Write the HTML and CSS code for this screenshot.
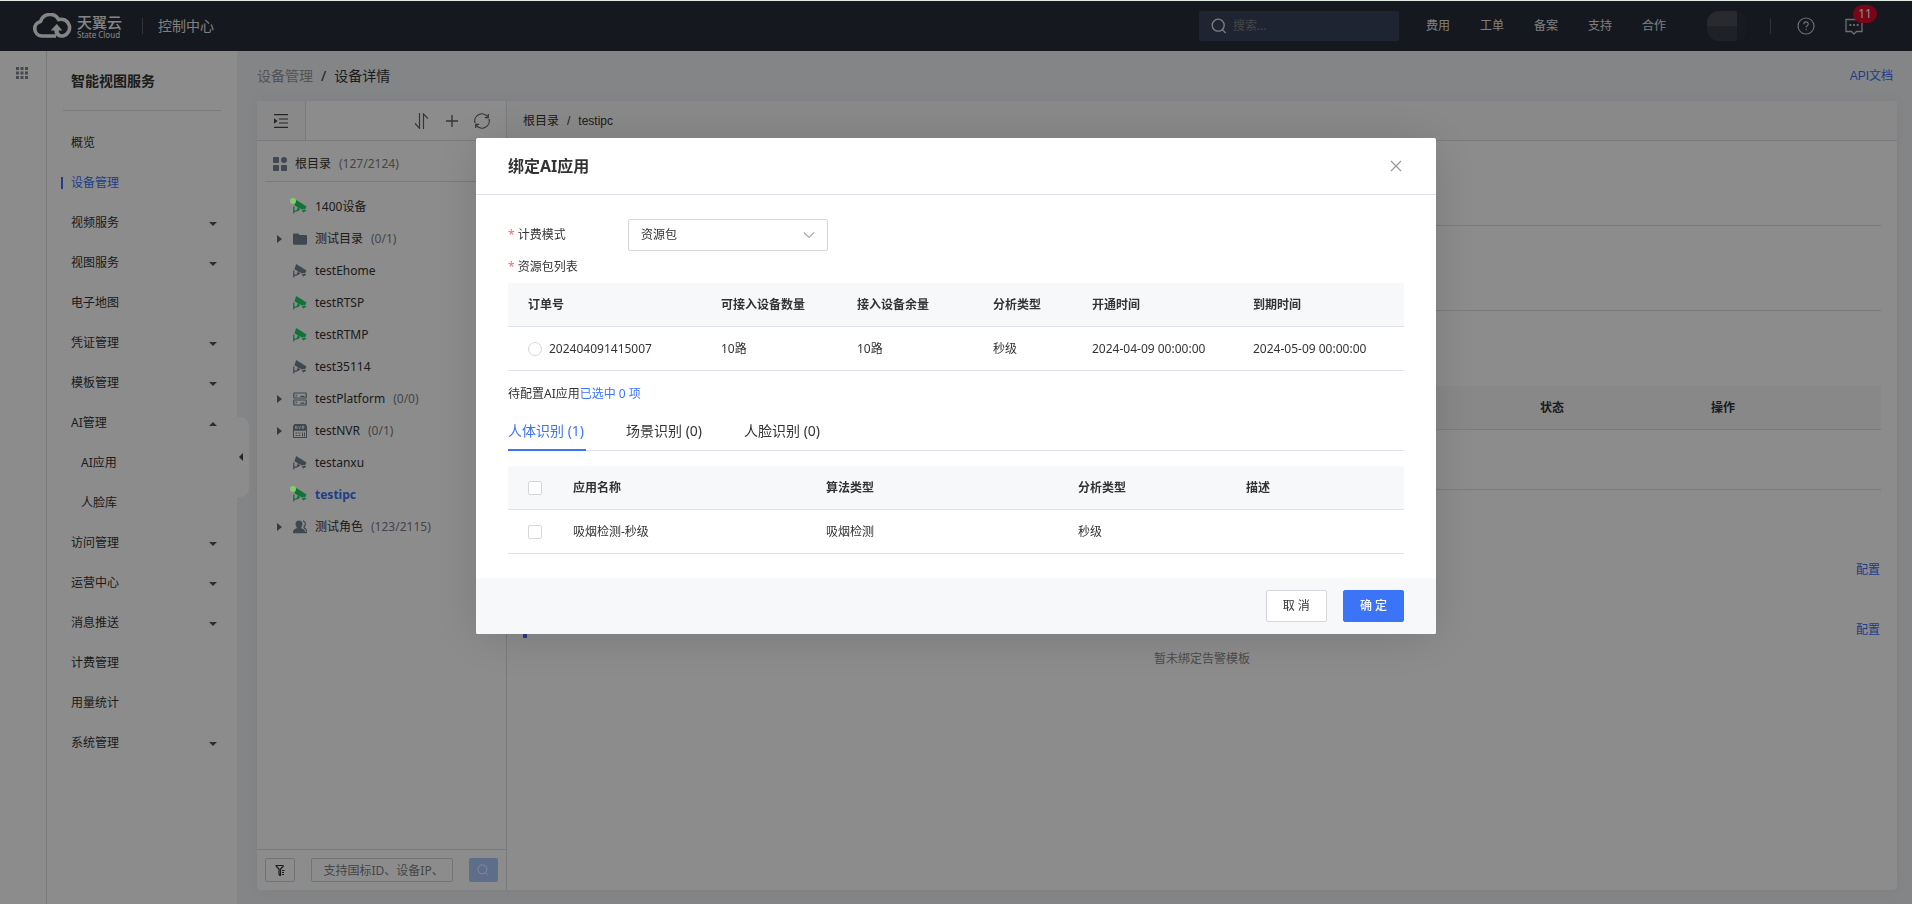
FILE: index.html
```html
<!DOCTYPE html>
<html lang="zh-CN">
<head>
<meta charset="utf-8">
<title>控制中心</title>
<link rel="stylesheet" href="styles.css">
</head>
<body>
<svg class="sprite" aria-hidden="true">
  <symbol id="camera" viewBox="0 0 14 14">
    <path fill="currentColor" d="M3.200 0 13.600 6.600 12.400 8.800 8.800 9.400 1.400 5.200z"/>
    <path fill="currentColor" d="M8.600 10.600l4-1 .6 1.200-3 1.600z"/>
    <path fill="none" stroke="currentColor" stroke-width="1.300" d="M.8 6.600v7M.8 11.400l3.200-.6 1.600-3.400M4 10.800l3-1.800"/>
  </symbol>
  <symbol id="folder" viewBox="0 0 14 14"><path fill="currentColor" d="M0 2.600C0 1.900.5 1.400 1.200 1.400h4l1.500 1.700h6.100c.7 0 1.200.5 1.200 1.200v7.200c0 .7-.5 1.200-1.200 1.200H1.200C.5 12.700 0 12.200 0 11.500z"/></symbol>
  <symbol id="server" viewBox="0 0 14 14"><g fill="none" stroke="currentColor" stroke-width="1.200"><rect x=".8" y="1" width="12.400" height="5" rx=".6"/><rect x=".8" y="8" width="12.400" height="5" rx=".6"/><path d="M3.200 2.800v1.600M3.200 9.600v1.600M7.500 4.400h4M7.500 11.200h4"/></g></symbol>
  <symbol id="nvr" viewBox="0 0 14 14"><path fill="currentColor" d="M1.500 0h11L14 2v4.500H0V2z"/><g fill="none" stroke="currentColor"><rect x=".5" y="6" width="13" height="7.500"/><path d="M2.500 9h2M2.500 11.500h2M5.500 9h2M5.500 11.500h2M9.500 8.500v4M11.500 8.500v4"/></g><path fill="none" stroke="#fff" stroke-width=".7" d="M2.500 4.900V2l1.500 2.900V2M5.600 2l1 2.900 1-2.900M9.300 4.900V2h1.500v1.400H9.400l1.700 1.500"/></symbol>
  <symbol id="user" viewBox="0 0 14 14"><path fill="currentColor" d="M6 .4c2.200 0 3.600 1.600 3.500 3.700 0 1.400-.6 2.500-1.300 3.200v1c1.900.5 3.900 1.400 3.900 3.600v1.300H0v-1.300c0-2.200 1.800-3.100 3.800-3.600v-1C3 6.600 2.500 5.500 2.500 4.100 2.400 2 3.800.4 6 .4z"/><path fill="none" stroke="currentColor" stroke-width="1.200" d="M10 .9c3 .8 3 4.300.9 6l.3 1c1.500.6 2.200 1.500 2.200 3.100v1.600h-1.400"/></symbol>
  <symbol id="search" viewBox="0 0 16 16"><circle cx="7.200" cy="7.200" r="6" fill="none" stroke="currentColor" stroke-width="1.300"/><path d="M11.400 11.600l3.200 3.400" stroke="currentColor" stroke-width="1.300"/></symbol>
</svg>

<div class="app">
  <header class="topbar">
    <a class="logo" href="#">
      <svg class="logo-mark" viewBox="0 0 40 26" aria-hidden="true"><path fill="none" stroke="currentColor" stroke-width="3.600" stroke-linejoin="round" d="M24 23H9.500A7.400 7.400 0 0 1 8.600 8.400 9.800 9.800 0 0 1 26.600 6.600a8.200 8.200 0 0 1 5 16.200c-4 .8-7.400-1.800-7.200-6.800"/><path fill="currentColor" d="M18.600 17.400l6.200-6.400 5.600 6.400-3.800.2c0 2.400.6 3.600 2 4.600l-1.600 2.200c-3.200-1.200-4.700-3.400-4.700-6.800z"/></svg>
      <span class="logo-words"><b class="logo-cn">天翼云</b><span class="logo-en">State Cloud</span></span>
    </a>
    <span class="bar-line"></span>
    <span class="console">控制中心</span>
    <label class="search"><svg class="i16"><use href="#search"/></svg><input type="text" placeholder="搜索..." aria-label="搜索"></label>
    <nav class="topnav"><a href="#">费用</a><a href="#">工单</a><a href="#">备案</a><a href="#">支持</a><a href="#">合作</a></nav>
    <span class="avatar"></span>
    <span class="bar-line"></span>
    <button class="iconbtn help" aria-label="帮助"><svg viewBox="0 0 18 18" fill="none" stroke="currentColor" stroke-width="1.200"><circle cx="9" cy="9" r="8"/><path d="M6.800 7.200c0-3 4.500-3 4.500-.2 0 1.700-2.200 1.700-2.200 3.600M9.100 12v1.300"/></svg></button>
    <button class="iconbtn msg" aria-label="消息"><svg viewBox="0 0 18 18" fill="none" stroke="currentColor" stroke-width="1.300"><path d="M1 2.500h16v12h-5.500L9 17l-2.500-2.500H1z"/><path stroke-width="1.800" d="M4.500 8h1.800M8.100 8h1.800M11.700 8h1.800"/></svg><span class="badge">11</span></button>
  </header>

  <div class="shell">
    <div class="rail"><button class="iconbtn" aria-label="全部产品"><svg class="i12" viewBox="0 0 12 12" fill="currentColor"><path d="M0 0h3v3H0zM4.500 0h3v3h-3zM9 0h3v3H9zM0 4.500h3v3H0zM4.500 4.500h3v3h-3zM9 4.500h3v3H9zM0 9h3v3H0zM4.500 9h3v3h-3zM9 9h3v3H9z"/></svg></button></div>

    <aside class="sidebar">
      <h2 class="side-title">智能视图服务</h2>
      <nav class="menu">
        <a href="#">概览</a>
        <a href="#" class="active">设备管理</a>
        <a href="#" class="more">视频服务</a>
        <a href="#" class="more">视图服务</a>
        <a href="#">电子地图</a>
        <a href="#" class="more">凭证管理</a>
        <a href="#" class="more">模板管理</a>
        <a href="#" class="more open">AI管理</a>
        <a href="#" class="sub">AI应用</a>
        <a href="#" class="sub">人脸库</a>
        <a href="#" class="more">访问管理</a>
        <a href="#" class="more">运营中心</a>
        <a href="#" class="more">消息推送</a>
        <a href="#">计费管理</a>
        <a href="#">用量统计</a>
        <a href="#" class="more">系统管理</a>
      </nav>
      <button class="fold" aria-label="收起菜单"></button>
    </aside>

    <main class="main">
      <div class="crumbs"><a href="#" class="crumb-parent">设备管理</a><span>/</span><span>设备详情</span><a href="#" class="api">API文档</a></div>
      <div class="card">
        <section class="devices">
          <div class="tools">
            <button class="iconbtn indent" aria-label="收起目录"><svg class="i14" viewBox="0 0 14 14"><path stroke="currentColor" stroke-width="1.200" d="M0 .6h14M5 5h9M5 9h9M0 13.400h14"/><path fill="currentColor" d="M0 4.200v5.600L3.600 7z"/></svg></button>
            <div class="tool-group">
              <button class="iconbtn" aria-label="排序"><svg class="i16" viewBox="0 0 16 16" fill="none" stroke="currentColor" stroke-width="1.200"><path d="M1 10.500 5.500 15.200V0M9.500 16V1l4.500 4.600"/></svg></button>
              <button class="iconbtn" aria-label="添加"><svg class="i16" viewBox="0 0 16 16" stroke="currentColor" stroke-width="1.400"><path d="M8 2v12M2 8h12"/></svg></button>
              <button class="iconbtn" aria-label="刷新"><svg class="i16" viewBox="0 0 16 16" fill="none" stroke="currentColor" stroke-width="1.200"><path d="M1 10A7.200 7.200 0 0 1 13.500 3.500M15 6A7.200 7.200 0 0 1 2.500 12.500M14.300 1v3.600h-3.400M1.700 15v-3.600h3.400"/></svg></button>
            </div>
          </div>
          <div class="root"><svg class="i14" viewBox="0 0 14 14" fill="currentColor"><rect width="6" height="6" rx=".8"/><circle cx="11" cy="3" r="3"/><rect y="8" width="6" height="6" rx=".8"/><rect x="8" y="8" width="6" height="6" rx=".8"/></svg><span>根目录</span><span class="count">(127/2124)</span></div>
          <ul class="tree">
            <li class="online live"><svg class="i14"><use href="#camera"/></svg><span>1400设备</span></li>
            <li class="branch"><svg class="i14"><use href="#folder"/></svg><span>测试目录</span><span class="count">(0/1)</span></li>
            <li><svg class="i14"><use href="#camera"/></svg><span>testEhome</span></li>
            <li class="online"><svg class="i14"><use href="#camera"/></svg><span>testRTSP</span></li>
            <li class="online"><svg class="i14"><use href="#camera"/></svg><span>testRTMP</span></li>
            <li><svg class="i14"><use href="#camera"/></svg><span>test35114</span></li>
            <li class="branch"><svg class="i14"><use href="#server"/></svg><span>testPlatform</span><span class="count">(0/0)</span></li>
            <li class="branch"><svg class="i14"><use href="#nvr"/></svg><span>testNVR</span><span class="count">(0/1)</span></li>
            <li><svg class="i14"><use href="#camera"/></svg><span>testanxu</span></li>
            <li class="online live current"><svg class="i14"><use href="#camera"/></svg><span>testipc</span></li>
            <li class="branch"><svg class="i14"><use href="#user"/></svg><span>测试角色</span><span class="count">(123/2115)</span></li>
          </ul>
          <div class="find">
            <button class="find-filter" aria-label="筛选"><svg class="i12" viewBox="0 0 12 12" fill="none" stroke="currentColor" stroke-width="1.200"><path d="M1.500 1.500h8M2 2l3 3v5.500L6.500 12V5l3-3M8 6.500h2.500M8 8.500h2M8 10.500h2"/></svg></button>
            <input class="find-input" type="text" placeholder="支持国标ID、设备IP、" aria-label="搜索设备">
            <button class="find-go" aria-label="搜索"><svg class="i12"><use href="#search"/></svg></button>
          </div>
        </section>

        <section class="detail">
          <div class="path"><span>根目录</span><span>/</span><span>testipc</span></div>
          <div class="detail-body">
            <div class="block"></div>
            <div class="block"></div>
            <table class="grid apps">
              <colgroup><col class="a-rest"><col class="a-state"><col class="a-act"></colgroup>
              <thead><tr><th></th><th>状态</th><th>操作</th></tr></thead>
              <tbody><tr><td></td><td></td><td></td></tr></tbody>
            </table>
            <div class="config first"><a href="#">配置</a></div>
            <div class="config marked"><a href="#">配置</a></div>
            <p class="empty">暂未绑定告警模板</p>
          </div>
        </section>
      </div>
    </main>
  </div>
</div>

<div class="mask">
  <div class="dialog" role="dialog" aria-labelledby="dialog-title">
    <div class="dialog-head">
      <h1 id="dialog-title">绑定AI应用</h1>
      <button class="iconbtn close" aria-label="关闭"><svg class="i12" viewBox="0 0 12 12" stroke="currentColor" stroke-width="1.200"><path d="M1 1l10 10M11 1 1 11"/></svg></button>
    </div>
    <div class="dialog-body">
      <div class="field">
        <label class="required" for="billing">计费模式</label>
        <span class="select-box"><select id="billing"><option>资源包</option></select><svg class="chevron" viewBox="0 0 12 12" fill="none" stroke="currentColor" stroke-width="1.200"><path d="M1 3.500l5 5 5-5"/></svg></span>
      </div>
      <div class="field"><span class="required">资源包列表</span></div>
      <table class="grid">
        <colgroup><col class="p-order"><col class="p-num"><col class="p-num"><col class="p-type"><col class="p-open"><col class="p-end"></colgroup>
        <thead><tr><th>订单号</th><th>可接入设备数量</th><th>接入设备余量</th><th>分析类型</th><th>开通时间</th><th>到期时间</th></tr></thead>
        <tbody><tr><td><label class="pick"><input type="radio" name="pack">202404091415007</label></td><td>10路</td><td>10路</td><td>秒级</td><td>2024-04-09 00:00:00</td><td>2024-05-09 00:00:00</td></tr></tbody>
      </table>
      <p class="chosen">待配置AI应用<span>已选中 0 项</span></p>
      <div class="tabs" role="tablist">
        <button role="tab" class="tab on" aria-selected="true">人体识别 (1)</button>
        <button role="tab" class="tab">场景识别 (0)</button>
        <button role="tab" class="tab">人脸识别 (0)</button>
      </div>
      <table class="grid">
        <colgroup><col class="q-pick"><col class="q-name"><col class="q-algo"><col class="q-type"><col class="q-desc"></colgroup>
        <thead><tr><th><input type="checkbox" aria-label="全选"></th><th>应用名称</th><th>算法类型</th><th>分析类型</th><th>描述</th></tr></thead>
        <tbody><tr><td><input type="checkbox" aria-label="吸烟检测-秒级"></td><td>吸烟检测-秒级</td><td>吸烟检测</td><td>秒级</td><td></td></tr></tbody>
      </table>
    </div>
    <div class="dialog-foot">
      <button class="btn">取 消</button>
      <button class="btn primary">确 定</button>
    </div>
  </div>
</div>
</body>
</html>
```

FILE: styles.css
```css
* { box-sizing: border-box; }

body {
  margin: 0;
  border-top: 1px solid #dfeae4;
  font: 12px/20px "Noto Sans", "Noto Sans CJK SC", sans-serif;
  color: #333;
  background: #f0f2f5;
}

a { color: inherit; text-decoration: none; }
button, input, select { font: inherit; color: inherit; }
h1, h2, p, ul { margin: 0; padding: 0; }
.sprite { position: absolute; width: 0; height: 0; }
.i12 { width: 12px; height: 12px; display: block; flex: none; }
.i14 { width: 14px; height: 14px; display: block; flex: none; overflow: visible; }
.i16 { width: 16px; height: 16px; display: block; flex: none; }
.iconbtn { padding: 0; border: 0; background: none; display: block; }

.app { display: flex; flex-direction: column; min-height: calc(100vh - 1px); }

/* Top bar */
.topbar {
  display: flex;
  align-items: center;
  height: 50px;
  padding: 0 49px 0 32px;
  background: #272c38;
  color: #e6e6e6;
}
.logo { display: flex; align-items: center; gap: 5px; color: #f2f2f2; }
.logo-mark { width: 40px; height: 26px; }
.logo-words { display: flex; flex-direction: column; width: 46px; }
.logo-cn { font-size: 15px; line-height: 16px; font-weight: 500; }
.logo-en { font-size: 8px; line-height: 9px; white-space: nowrap; }
.bar-line { width: 1px; height: 16px; margin: 0 15px 0 19px; background: #5a5e68; }
.console { font-size: 14px; }
.search {
  display: flex;
  align-items: center;
  gap: 6px;
  width: 200px;
  height: 30px;
  margin-left: auto;
  padding: 0 12px;
  border-radius: 2px;
  background: #38435c;
}
.search input { min-width: 0; flex: 1; padding: 0; border: 0; background: none; outline: 0; }
.search input::placeholder { color: #7c7f87; opacity: 1; }
.topnav { display: flex; gap: 30px; margin: 0 41px 0 27px; }
.avatar {
  width: 40px;
  height: 30px;
  border-radius: 12px;
  background: linear-gradient(#4b4d57 0 50%, #3a3d47 50%) left / 30px 100% no-repeat, #2c313c;
}
.avatar + .bar-line { margin: 0 26px 0 23px; }
.help svg, .msg svg { display: block; width: 18px; height: 18px; }
.help { color: #c8c8c8; }
.msg { position: relative; margin-left: 30px; color: #c8c8c8; }
.badge {
  position: absolute;
  left: 8px;
  top: -12px;
  min-width: 24px;
  height: 18px;
  border-radius: 9px;
  background: #dc0a2d;
  color: #fff;
  line-height: 18px;
  text-align: center;
}

/* Shell and side menu */
.shell { display: flex; flex: 1; }
.rail { width: 47px; padding: 16px; border-right: 1px solid #dfe1e6; background: #fff; color: #7f858e; }
.sidebar { position: relative; width: 190px; padding: 15px 16px 0; background: #fff; }
.side-title {
  height: 45px;
  padding-left: 8px;
  border-bottom: 1px solid #dfe1e6;
  font-size: 14px;
  line-height: 30px;
  font-weight: 700;
}
.menu { display: flex; flex-direction: column; padding-top: 12px; }
.menu a { position: relative; display: flex; align-items: center; justify-content: space-between; height: 40px; padding: 0 4px 0 8px; }
.menu .sub { padding-left: 18px; }
.menu .active { color: #3b6ff5; }
.menu .active::before { content: ""; position: absolute; left: -2px; width: 2px; height: 12px; background: #3b6ff5; }
.more::after { content: ""; margin-top: 2px; border: 4px solid transparent; border-top-color: #555; border-bottom: 0; }
.more.open::after { border-top: 0; border-bottom: 4px solid #555; }
.fold {
  position: absolute;
  left: 100%;
  top: 366px;
  display: flex;
  align-items: center;
  width: 12px;
  height: 80px;
  padding: 0 2px;
  border: 0;
  border-radius: 0 9px 9px 0;
  background: #fff;
}
.fold::before { content: ""; border: 4px solid transparent; border-right-color: #444; border-left: 0; }

/* Main area */
.main { display: flex; flex: 1; flex-direction: column; min-width: 0; padding: 0 15px 14px 20px; }
.crumbs { display: flex; align-items: center; gap: 8px; height: 50px; padding-right: 4px; font-size: 14px; }
.crumb-parent { color: #969799; }
.api { margin-left: auto; font-size: 12px; color: #3b6ff5; font-family: "Liberation Sans", "Noto Sans CJK SC", sans-serif; }
.card { display: flex; flex: 1; border-radius: 4px; background: #fff; box-shadow: 0 0 12px rgba(40, 50, 90, .06); }

.devices { display: flex; flex-direction: column; width: 250px; border-right: 1px solid #dcdfe6; }
.tools { display: flex; height: 40px; border-bottom: 1px solid #dcdfe6; color: #606266; }
.indent { width: 49px; padding-left: 17px; border-right: 1px solid #dcdfe6; background: #fafafa; color: #444; }
.tool-group { display: flex; align-items: center; gap: 14px; margin-left: auto; padding-right: 16px; }
.root {
  display: flex;
  align-items: center;
  gap: 8px;
  height: 41px;
  margin-left: 8px;
  padding: 6px 8px 0;
  border-bottom: 1px solid #dcdfe6;
}
.root svg { color: #768695; }
.count { color: #7c8085; }
.tree { flex: 1; padding-top: 9px; list-style: none; }
.tree li { position: relative; display: flex; align-items: center; gap: 8px; height: 32px; padding-left: 36px; }
.tree svg { color: #758391; }
.tree .online svg { color: #1fd167; }
.branch::before {
  content: "";
  position: absolute;
  left: 20px;
  border: 4px solid transparent;
  border-left: 5px solid #606a74;
  border-right: 0;
}
.live::before { content: ""; position: absolute; left: 33px; top: 7px; width: 6px; height: 6px; border-radius: 50%; background: #84cc6c; z-index: 1; }
.current { color: #3b6ff5; font-weight: 700; }
.find { display: flex; align-items: center; gap: 16px; height: 41px; padding: 0 8px; border-top: 1px solid #dcdfe6; }
.find button { display: grid; place-items: center; width: 30px; height: 24px; padding: 0; border: 1px solid #cfd1d6; border-radius: 2px; background: #fff; }
.find .find-go { border: 0; background: #a9c6fb; color: #fff; }
.find-input { width: 142px; height: 24px; padding: 0 12px; border: 1px solid #cfd1d6; border-radius: 2px; background: #fff; }
.find-input::placeholder { color: #7d8087; opacity: 1; }

.detail { display: flex; flex: 1; flex-direction: column; min-width: 0; }
.path {
  display: flex;
  align-items: center;
  gap: 8px;
  height: 40px;
  padding: 0 16px;
  border-bottom: 1px solid #dcdfe6;
  background: #fafafa;
  font-family: "Liberation Sans", "Noto Sans CJK SC", sans-serif;
}
.detail-body { padding: 0 16px; }
.block { height: 85px; border-bottom: 1px solid #dcdfe6; }
.grid.apps { margin-top: 75px; }
.apps tbody tr { height: 60px; }
.a-state { width: 171px; }
.a-act { width: 190px; }
.config { display: flex; align-items: center; justify-content: flex-end; height: 32px; margin-top: 28px; padding-right: 1px; color: #3b6ff5; }
.config.first { margin-top: 64px; }
.marked::before { content: ""; width: 4px; height: 16px; margin-right: auto; background: #3b6ff5; }
.empty { color: #8a8a8a; text-align: center; line-height: 26px; }

/* Tables */
.grid { width: 100%; border-collapse: separate; border-spacing: 0; table-layout: fixed; }
.grid tr { height: 44px; }
.grid th { font-weight: 700; text-align: left; background: #f7f8fa; }
.grid th, .grid td { padding: 0 0 0 20px; border-bottom: 1px solid #dfe1ec; white-space: nowrap; }

input[type="radio"], input[type="checkbox"] {
  appearance: none;
  display: block;
  width: 14px;
  height: 14px;
  margin: 0;
  border: 1px solid #d5d7dc;
  border-radius: 2px;
  background: #fff;
}
input[type="radio"] { border-radius: 50%; }
.pick { display: flex; align-items: center; gap: 7px; }

/* Dialog */
.mask {
  position: fixed;
  inset: 1px 0 0;
  display: flex;
  align-items: flex-start;
  justify-content: center;
  padding: 137px 24px 24px;
  overflow: auto;
  background: rgba(0, 0, 0, .45);
}
.dialog { width: 960px; max-width: 100%; border-radius: 2px; overflow: hidden; background: #fff; box-shadow: 0 4px 48px rgba(0, 0, 0, .14); }
.dialog-head { display: flex; align-items: center; justify-content: space-between; height: 57px; padding: 0 34px 0 32px; border-bottom: 1px solid #dfe1ec; }
.dialog-head h1 { font-size: 16px; line-height: 24px; font-weight: 700; }
.close { color: #999; }
.dialog-body { padding: 24px 32px; }
.field { display: flex; align-items: center; height: 32px; }
.required { width: 120px; }
.required::before { content: "*"; margin-right: 3px; color: #ff6a6a; }
.select-box { position: relative; width: 200px; }
.select-box select { appearance: none; display: block; width: 100%; height: 32px; padding: 0 12px; border: 1px solid #d5d7dc; border-radius: 2px; background: #fff; }
.chevron { position: absolute; right: 13px; top: 10px; width: 12px; height: 12px; color: #a5a8ad; pointer-events: none; }
.p-order { width: 193px; }
.p-num { width: 136px; }
.p-type { width: 99px; }
.p-open { width: 161px; }
.q-pick { width: 45px; }
.q-name { width: 253px; }
.q-algo { width: 252px; }
.q-type { width: 168px; }
.chosen { height: 40px; padding-top: 13px; }
.chosen span { color: #3b74f7; }
.tabs { display: flex; gap: 40px; height: 40px; margin-bottom: 15px; border-bottom: 1px solid #dfe1ec; }
.tab { min-width: 78px; height: 40px; padding: 2px 0 0; border: 0; border-bottom: 2px solid transparent; background: none; font-size: 14px; text-align: left; }
.tab.on { border-bottom-color: #3b74f7; color: #3b74f7; }
.dialog-foot { display: flex; justify-content: flex-end; gap: 16px; padding: 12px 32px; background: #f7f8fa; }
.btn { height: 32px; padding: 0 16px; border: 1px solid #d5d7dc; border-radius: 2px; background: #fff; }
.btn.primary { border-color: #3b74f7; background: #3b74f7; color: #fff; font-weight: 500; }
```
